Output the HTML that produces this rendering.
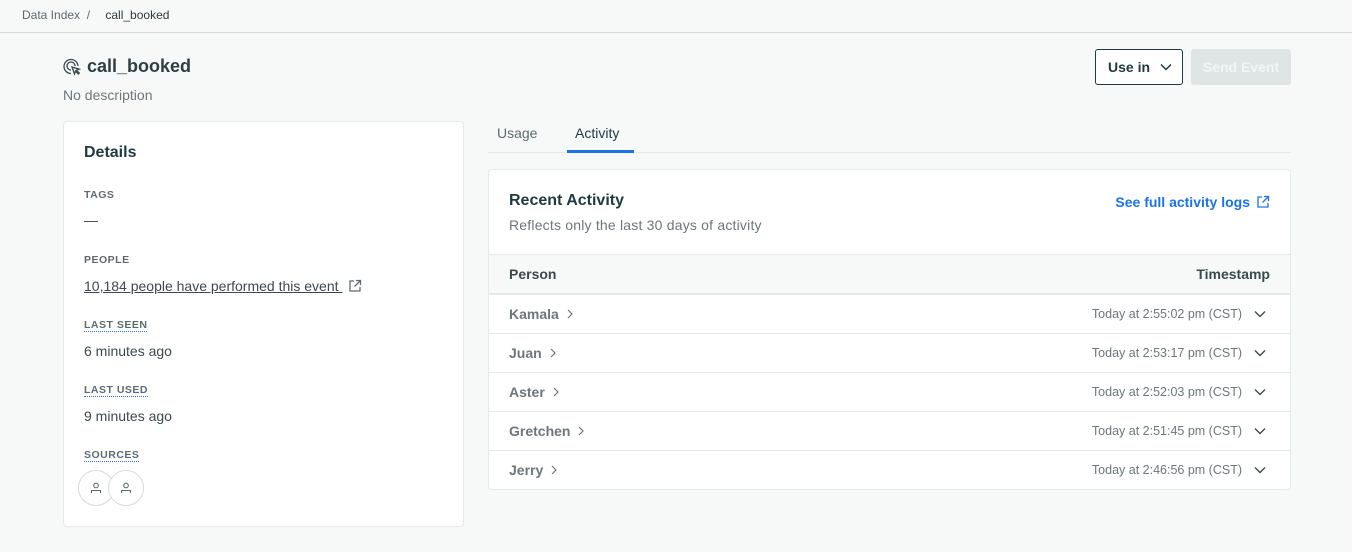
<!DOCTYPE html>
<html><head><meta charset="utf-8"><style>
*{box-sizing:border-box;margin:0;padding:0}
body{width:1352px;height:552px;background:#f7f8f8;font-family:"Liberation Sans",sans-serif;color:#3a4a4f;position:relative;overflow:hidden}
.abs{position:absolute}
.crumb{left:0;top:0;width:1352px;height:33px;border-bottom:1px solid #d3dcde;font-size:12px;color:#5d6b70;padding:8px 0 0 22px}
.crumb b{font-weight:normal;color:#2d3b40;margin-left:12px}
h1{left:63px;top:56px;font-size:18px;font-weight:bold;color:#2f3e44;display:flex;align-items:center;gap:6px}
.desc{left:63px;top:87px;font-size:14px;color:#6b777b}
.btn1{left:1095px;top:49px;width:88px;height:36px;border:1px solid #1f3a40;border-radius:3px;background:#fff;font-size:14px;font-weight:bold;color:#1f3a40;display:flex;align-items:center;padding-left:12px;gap:10px}
.btn2{left:1191px;top:49px;width:100px;height:36px;border-radius:3px;background:#dfe4e5;color:#f3f5f5;font-size:14px;font-weight:bold;display:flex;align-items:center;justify-content:center}
.card{left:63px;top:121px;width:401px;height:406px;background:#fff;border:1px solid #e4e9ea;border-radius:4px}
.lbl{font-size:10.5px;font-weight:bold;letter-spacing:.5px;color:#5d6b70;position:absolute;left:20px}
.dot{border-bottom:1px dotted #2b6fe0}
.val{font-size:14px;color:#3a4a4f;position:absolute;left:20px}
.tabs{left:488px;top:114px;width:803px;height:39px;border-bottom:1px solid #e4e9ea;font-size:14px}
.panel{left:488px;top:169px;width:803px;height:321px;background:#fff;border:1px solid #e4e9ea;border-radius:4px;overflow:hidden}
.row{position:absolute;left:0;width:801px;height:39px;border-top:1px solid #e4e9ea;display:flex;align-items:center;padding:0 24px 0 20px}
.nm{font-size:14px;font-weight:bold;color:#6b777b;flex:1;display:flex;align-items:center;gap:8px}
.ts{font-size:12.5px;color:#6b777b;margin-right:12px}
</style></head><body>
<div class="abs crumb">Data Index &nbsp;/ <b>call_booked</b></div>
<h1 class="abs"><svg width="18" height="18" viewBox="0 0 18 18" fill="none" stroke="#3a4a4f" stroke-width="1.3"><path d="M8 15.5A7 7 0 1 1 15 8"/><path d="M8 12A4 4 0 1 1 12 8"/><path d="M9 9l2.5 7 1-2.8 2.8 2.8 1-1-2.8-2.8 2.8-1z"/></svg>call_booked</h1>
<div class="abs desc">No description</div>
<div class="abs btn1">Use in <svg width="12" height="8" viewBox="0 0 12 8" fill="none" stroke="#1f3a40" stroke-width="1.5"><path d="M1 1.5l5 5 5-5"/></svg></div>
<div class="abs btn2">Send Event</div>
<div class="abs card">
<div style="position:absolute;left:20px;top:22px;font-size:16px;font-weight:bold;color:#1f3a40">Details</div>
<div class="lbl" style="top:67px">TAGS</div>
<div class="val" style="top:90px">—</div>
<div class="lbl" style="top:132px">PEOPLE</div>
<div class="val" style="top:156px;text-decoration:underline;display:flex;align-items:center;gap:6px">10,184 people have performed this event&nbsp; <svg width="14" height="14" viewBox="0 0 14 14" fill="none" stroke="#5d6b70" stroke-width="1.3"><path d="M6 2H2v10h10V8M8 1.5h4.5V6M12.5 1.5L6.5 7.5"/></svg></div>
<div class="lbl" style="top:197px"><span class="dot">LAST SEEN</span></div>
<div class="val" style="top:221px">6 minutes ago</div>
<div class="lbl" style="top:262px"><span class="dot">LAST USED</span></div>
<div class="val" style="top:286px">9 minutes ago</div>
<div class="lbl" style="top:327px"><span class="dot">SOURCES</span></div>
<div style="position:absolute;left:14px;top:348px;width:36px;height:36px;border:1px solid #d3dcde;border-radius:50%;background:#fff;display:flex;align-items:center;justify-content:center"><svg width="12" height="12" viewBox="0 0 12 12" fill="none" stroke="#5d6b70" stroke-width="1.1"><circle cx="6" cy="3.5" r="2.3"/><path d="M1.5 11V8.5h9V11"/></svg></div>
<div style="position:absolute;left:44px;top:348px;width:36px;height:36px;border:1px solid #d3dcde;border-radius:50%;background:#fff;display:flex;align-items:center;justify-content:center"><svg width="12" height="12" viewBox="0 0 12 12" fill="none" stroke="#5d6b70" stroke-width="1.1"><circle cx="6" cy="3.5" r="2.3"/><path d="M1.5 11V8.5h9V11"/></svg></div>
</div>
<div class="abs tabs">
<span style="position:absolute;left:9px;top:11px;color:#5d6b70">Usage</span>
<span style="position:absolute;left:87px;top:11px;color:#1f3a40">Activity</span>
<div style="position:absolute;left:79px;top:36px;width:67px;height:3px;background:#1a73e8"></div>
</div>
<div class="abs panel">
<div style="position:absolute;left:20px;top:22px;font-size:16px;font-weight:bold;color:#1f3a40">Recent Activity</div>
<div style="position:absolute;left:20px;top:47px;font-size:14px;letter-spacing:.2px;color:#6b777b">Reflects only the last 30 days of activity</div>
<div style="position:absolute;right:20px;top:24px;font-size:14px;font-weight:bold;color:#1a73e8;display:flex;align-items:center;gap:6px">See full activity logs <svg width="14" height="14" viewBox="0 0 14 14" fill="none" stroke="#1a73e8" stroke-width="1.3"><path d="M6 2H2v10h10V8M8 1.5h4.5V6M12.5 1.5L6.5 7.5"/></svg></div>
<div class="row" style="top:84px;background:#f7f8f8;border-bottom:1px solid #e4e9ea;height:40px;padding-right:20px"><span style="flex:1;font-size:14px;font-weight:bold;color:#3a4a4f">Person</span><span style="font-size:14px;font-weight:bold;color:#3a4a4f">Timestamp</span></div>
<div class="row" style="top:124px"><span class="nm">Kamala <svg width="6" height="10" viewBox="0 0 6 10" fill="none" stroke="#6b777b" stroke-width="1.2"><path d="M1 1l4 4-4 4"/></svg></span><span class="ts">Today at 2:55:02 pm (CST)</span><svg width="12" height="8" viewBox="0 0 12 8" fill="none" stroke="#3a4a4f" stroke-width="1.4"><path d="M1 1.5l5 5 5-5"/></svg></div>
<div class="row" style="top:163px"><span class="nm">Juan <svg width="6" height="10" viewBox="0 0 6 10" fill="none" stroke="#6b777b" stroke-width="1.2"><path d="M1 1l4 4-4 4"/></svg></span><span class="ts">Today at 2:53:17 pm (CST)</span><svg width="12" height="8" viewBox="0 0 12 8" fill="none" stroke="#3a4a4f" stroke-width="1.4"><path d="M1 1.5l5 5 5-5"/></svg></div>
<div class="row" style="top:202px"><span class="nm">Aster <svg width="6" height="10" viewBox="0 0 6 10" fill="none" stroke="#6b777b" stroke-width="1.2"><path d="M1 1l4 4-4 4"/></svg></span><span class="ts">Today at 2:52:03 pm (CST)</span><svg width="12" height="8" viewBox="0 0 12 8" fill="none" stroke="#3a4a4f" stroke-width="1.4"><path d="M1 1.5l5 5 5-5"/></svg></div>
<div class="row" style="top:241px"><span class="nm">Gretchen <svg width="6" height="10" viewBox="0 0 6 10" fill="none" stroke="#6b777b" stroke-width="1.2"><path d="M1 1l4 4-4 4"/></svg></span><span class="ts">Today at 2:51:45 pm (CST)</span><svg width="12" height="8" viewBox="0 0 12 8" fill="none" stroke="#3a4a4f" stroke-width="1.4"><path d="M1 1.5l5 5 5-5"/></svg></div>
<div class="row" style="top:280px"><span class="nm">Jerry <svg width="6" height="10" viewBox="0 0 6 10" fill="none" stroke="#6b777b" stroke-width="1.2"><path d="M1 1l4 4-4 4"/></svg></span><span class="ts">Today at 2:46:56 pm (CST)</span><svg width="12" height="8" viewBox="0 0 12 8" fill="none" stroke="#3a4a4f" stroke-width="1.4"><path d="M1 1.5l5 5 5-5"/></svg></div>
</div>
</body></html>
